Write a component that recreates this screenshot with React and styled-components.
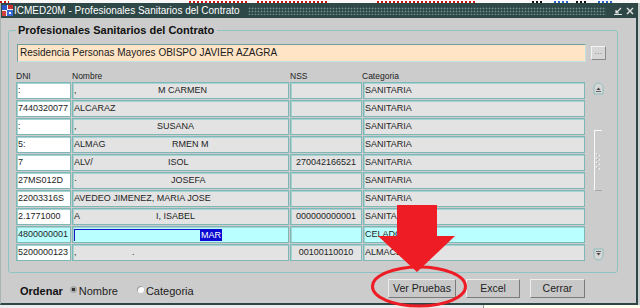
import styled, { createGlobalStyle } from "styled-components";

const GlobalStyle = createGlobalStyle`
  html, body {
    margin: 0;
    padding: 0;
    background: #d4d4d4;
  }
  body {
    font-family: "Liberation Sans", Arial, sans-serif;
  }
`;

const rows = [
  { dni: ":", name: ",", rest: "M CARMEN", at: 84, nss: "", cat: "SANITARIA" },
  { dni: "7440320077", name: "ALCARAZ", nss: "", cat: "SANITARIA" },
  { dni: ":", name: ",", rest: "SUSANA", at: 83, nss: "", cat: "SANITARIA" },
  { dni: "5:", name: "ALMAG", rest: "RMEN M", at: 98, nss: "", cat: "SANITARIA" },
  { dni: "7", name: "ALV/", rest: "ISOL", at: 94, nss: "270042166521", cat: "SANITARIA" },
  { dni: "27MS012D", name: "·", rest: "JOSEFA", at: 97, nss: "", cat: "SANITARIA" },
  { dni: "22003316S", name: "AVEDEO JIMENEZ, MARIA JOSE", nss: "", cat: "SANITARIA" },
  { dni: "2.1771000", name: "A", rest: "I, ISABEL", at: 82, nss: "000000000001", cat: "SANITARIA" },
  { dni: "4800000001", selected: "MAR", at: 126, nss: "", cat: "CELADOR", active: true },
  { dni: "5200000123", name: ",", rest: ".", at: 58, nss: "00100110010", cat: "ALMACEN" },
];

// bits of the window behind, peeking out above the title bar
const behind = [
  { w: 9, c: "#d01414" },
  { w: 180, c: "transparent" },
  { w: 60, c: "#d01414" },
  { w: 8, c: "transparent" },
  { w: 70, c: "#d01414" },
  { w: 50, c: "transparent" },
  { w: 100, c: "#d01414" },
  { w: 55, c: "transparent" },
  { w: 12, c: "#111111" },
  { w: 10, c: "transparent" },
  { w: 14, c: "#2a64c8" },
  { w: 8, c: "transparent" },
  { w: 12, c: "#111111" },
  { w: 10, c: "transparent" },
  { w: 14, c: "#2a64c8" },
];

function TitleIcon() {
  return (
    <svg width="11" height="11" viewBox="0 0 11 11">
      <rect x="0" y="0" width="11" height="11" fill="#f2f2f2" />
      <rect x="0" y="0" width="5" height="5" fill="#2a58c8" />
      <rect x="6" y="0" width="5" height="4" fill="#c83030" />
      <rect x="0" y="6" width="4" height="5" fill="#d04040" />
      <rect x="5" y="5" width="6" height="6" fill="#3a6ad8" />
      <rect x="7" y="7" width="2" height="2" fill="#fff" />
    </svg>
  );
}

function WindowControls() {
  return (
    <Controls>
      <svg width="8" height="8" viewBox="0 0 8 8">
        <path d="M7 1 L2 6 M2 3 L2 6 L5 6 M0 7.5 L8 7.5" stroke="#e4e4e4" strokeWidth="1.2" fill="none" />
      </svg>
      <svg width="8" height="8" viewBox="0 0 8 8">
        <path d="M1 1 L7 7 M7 1 L1 7" stroke="#e4e4e4" strokeWidth="1.4" />
      </svg>
    </Controls>
  );
}

function ScrollArrow({ down }) {
  return (
    <svg width="11" height="13" viewBox="0 0 11 13" style={down ? { transform: "scaleY(-1)" } : undefined}>
      <path d="M1 12 L1 5.5 A4.5 4.5 0 0 1 10 5.5 L10 12 Z" fill="#d6d6d6" stroke="#8cc0c0" strokeWidth="1" />
      <path d="M3.5 8 L5.5 5.5 L7.5 8 Z" fill="#444" />
      <path d="M3 9.5 L8 9.5" stroke="#666" strokeWidth="1" />
    </svg>
  );
}

function Grip() {
  return (
    <svg width="8" height="18" viewBox="0 0 8 18">
      {[0, 5, 10, 15].map((y) => (
        <g key={y}>
          <rect x="1" y={y} width="1.5" height="1.5" fill="#fafafa" />
          <rect x="4" y={y + 2} width="1.5" height="1.5" fill="#fafafa" />
          <rect x="2.5" y={y + 1.5} width="1" height="1" fill="#888" />
        </g>
      ))}
    </svg>
  );
}

function NameCell({ row }) {
  if (row.active) {
    return (
      <Cell $tone="cyan">
        <Focus $w={row.at} />
        <Selection>{row.selected}</Selection>
      </Cell>
    );
  }
  return (
    <Cell $tone="grey">
      {row.rest ? <Head $w={row.at}>{row.name}</Head> : row.name}
      {row.rest}
    </Cell>
  );
}

function Annotation() {
  return (
    <Overlay width="640" height="308" viewBox="0 0 640 308">
      <polygon
        points="397,205 437,205 437,236 455,236 417,272 378,236 397,236"
        fill="#ee1c24"
      />
      <ellipse cx="419" cy="286.5" rx="46.5" ry="19.5" fill="none" stroke="#ee1c24" strokeWidth="3" />
    </Overlay>
  );
}

export default function App() {
  return (
    <>
      <GlobalStyle />
      <Screen>
        <TopStrip>
          {behind.map((b, i) => (
            <Peek key={i} $w={b.w} $c={b.c} />
          ))}
        </TopStrip>
        <Window>
          <TitleBar>
            <IconSlot>
              <TitleIcon />
            </IconSlot>
            <TitleText>ICMED20M - Profesionales Sanitarios del Contrato</TitleText>
            <TitleDots />
            <WindowControls />
          </TitleBar>
          <Body>
            <Group>
              <Legend>Profesionales Sanitarios del Contrato</Legend>
              <InputRow>
                <Field>Residencia Personas Mayores OBISPO JAVIER AZAGRA</Field>
                <LovButton>...</LovButton>
              </InputRow>
              <TableArea>
                <Table>
                  <HeaderRow>
                    <span>DNI</span>
                    <span>Nombre</span>
                    <span>NSS</span>
                    <HeaderLast>Categoria</HeaderLast>
                  </HeaderRow>
                  <Rows>
                    {rows.map((row, i) => (
                      <Row key={i}>
                        <Cell $tone={row.active ? "cyan" : "white"}>{row.dni}</Cell>
                        <NameCell row={row} />
                        <Cell $tone={row.active ? "cyan" : "grey"} $center>
                          {row.nss}
                        </Cell>
                        <Cell $tone={row.active ? "cyan" : "grey"}>{row.cat}</Cell>
                      </Row>
                    ))}
                  </Rows>
                </Table>
                <Scroll>
                  <ScrollArrow />
                  <Thumb>
                    <Grip />
                  </Thumb>
                  <DownSlot>
                    <ScrollArrow down />
                  </DownSlot>
                </Scroll>
              </TableArea>
            </Group>
            <BottomBar>
              <SortLabel>Ordenar</SortLabel>
              <Radio $gap={19}>
                <RadioDot $checked />
                Nombre
              </Radio>
              <Radio>
                <RadioDot />
                Categoria
              </Radio>
              <Buttons>
                <Button $w={68}>Ver Pruebas</Button>
                <Button $w={54}>Excel</Button>
                <Button $w={55}>Cerrar</Button>
              </Buttons>
            </BottomBar>
          </Body>
        </Window>
        <BottomStrip>
          <StripLeft />
          <StripRight />
        </BottomStrip>
        <Annotation />
      </Screen>
    </>
  );
}

const Screen = styled.div`
  position: relative;
  width: 640px;
  height: 308px;
  overflow: hidden;
  display: flex;
  flex-direction: column;
  background: #c9cfcf;
`;

const TopStrip = styled.div`
  height: 3px;
  flex-shrink: 0;
  display: flex;
  background: #f8f8f8;
`;

const Peek = styled.span`
  width: ${(p) => p.$w}px;
  height: 2px;
  margin-top: 1px;
  flex-shrink: 0;
  background: ${(p) =>
    p.$c === "transparent"
      ? "transparent"
      : `repeating-linear-gradient(90deg, ${p.$c} 0 2px, transparent 2px 4px)`};
`;

const Window = styled.div`
  width: 638px;
  height: 302px;
  box-sizing: border-box;
  border-left: 1px solid #aab4b4;
  border-right: 2px solid #2d4545;
  border-bottom: 2px solid #2d4545;
  display: flex;
  flex-direction: column;
  background: #cccccc;
`;

const TitleBar = styled.div`
  height: 15px;
  flex-shrink: 0;
  display: flex;
  align-items: center;
  background: #2e4848;
  color: #ffffff;
  font-size: 10px;
`;

const IconSlot = styled.div`
  display: flex;
  margin-left: 1px;
  margin-right: 1px;
`;

const TitleText = styled.span`
  white-space: nowrap;
  line-height: 15px;
`;

const TitleDots = styled.div`
  flex: 1;
  height: 8px;
  margin: 0 8px 0 8px;
  background-image: radial-gradient(circle, #6e8e8e 0.8px, transparent 1.1px);
  background-size: 3px 3px;
`;

const Controls = styled.div`
  display: flex;
  align-items: center;
  gap: 4px;
  margin-right: 2px;
`;

const Body = styled.div`
  flex: 1;
  display: flex;
  flex-direction: column;
  padding: 5px 18px 0 7px;
`;

const Group = styled.fieldset`
  margin: 0;
  padding: 7px 11px 11px 7px;
  border: 1px solid #8ec3c3;
  border-radius: 3px;
  min-width: 0;
`;

const Legend = styled.legend`
  padding: 0 3px 0 2px;
  font-size: 11px;
  font-weight: bold;
  line-height: 14px;
  color: #111111;
`;

const InputRow = styled.div`
  display: flex;
  align-items: center;
  gap: 5px;
`;

const Field = styled.div`
  margin-left: 1px;
  width: 569px;
  height: 18px;
  box-sizing: border-box;
  padding-left: 2px;
  background: #ffe4c6;
  border: 1px solid;
  border-color: #6f9c9c #c4e2e2 #c4e2e2 #6f9c9c;
  font-size: 10px;
  line-height: 16px;
  color: #1a1a1a;
  white-space: nowrap;
`;

const LovButton = styled.div`
  width: 15px;
  height: 14px;
  box-sizing: border-box;
  display: flex;
  align-items: center;
  justify-content: center;
  border: 1px solid;
  border-color: #f4f4f4 #8a8a8a #8a8a8a #f4f4f4;
  background: #d6d6d6;
  font-size: 8px;
  line-height: 8px;
  color: #666666;
  letter-spacing: 0.5px;
  padding-bottom: 3px;
`;

const TableArea = styled.div`
  display: flex;
`;

const Table = styled.div`
  width: 569px;
  display: flex;
  flex-direction: column;
`;

const columns = "55px 217px 72px 222px";

const HeaderRow = styled.div`
  display: grid;
  grid-template-columns: ${columns};
  column-gap: 1px;
  margin-top: 8px;
  height: 12px;
  font-size: 8.5px;
  line-height: 12px;
  color: #222222;
`;

const HeaderLast = styled.span`
  margin-left: -1px;
`;

const Rows = styled.div`
  display: flex;
  flex-direction: column;
  gap: 1px;
`;

const Row = styled.div`
  display: grid;
  grid-template-columns: ${columns};
  column-gap: 1px;
  height: 17px;
`;

const tones = {
  white: "#ffffff",
  grey: "#e3e3e3",
  cyan: "#baffff",
};

const Cell = styled.div`
  box-sizing: border-box;
  height: 17px;
  display: flex;
  align-items: center;
  justify-content: ${(p) => (p.$center ? "center" : "flex-start")};
  padding: 0 1px;
  border: 1px solid #7fb6b6;
  box-shadow: inset 1px 1px 0 #a6d3d3;
  background: ${(p) => tones[p.$tone]};
  font-size: 9px;
  line-height: 15px;
  color: #1e1e1e;
  white-space: nowrap;
  overflow: hidden;
`;

const Head = styled.span`
  display: inline-block;
  flex-shrink: 0;
  width: ${(p) => p.$w}px;
`;

const Focus = styled.span`
  flex-shrink: 0;
  width: ${(p) => p.$w}px;
  height: 12px;
  box-sizing: border-box;
  border-top: 1px solid #1414c8;
  border-left: 1px solid #1414c8;
`;

const Selection = styled.span`
  background: #0a0ad2;
  color: #ffffff;
  line-height: 12px;
  padding: 0 1px;
`;

const Scroll = styled.div`
  width: 12px;
  margin-left: 7px;
  padding-top: 20px;
  display: flex;
  flex-direction: column;
  align-items: center;
`;

const Thumb = styled.div`
  margin-top: 35px;
  width: 8px;
  height: 61px;
  box-sizing: border-box;
  border-top: 1px solid #fafafa;
  border-left: 1px solid #fafafa;
  border-bottom: 1px solid #a8a8a8;
  display: flex;
  align-items: center;
  justify-content: center;
`;

const DownSlot = styled.div`
  margin-top: auto;
  display: flex;
`;

const BottomBar = styled.div`
  height: 30px;
  display: flex;
  align-items: center;
  padding: 0 33px 0 12px;
`;

const SortLabel = styled.span`
  font-size: 11px;
  font-weight: bold;
  color: #111111;
  margin-right: 7px;
  padding-top: 5px;
`;

const Radio = styled.label`
  display: inline-flex;
  align-items: center;
  font-size: 11px;
  color: #222222;
  margin-right: ${(p) => p.$gap || 0}px;
  padding-top: 5px;
`;

const RadioDot = styled.span`
  width: 7px;
  height: 7px;
  border-radius: 50%;
  margin-right: 2px;
  margin-top: -2px;
  box-sizing: border-box;
  background: ${(p) => (p.$checked ? "radial-gradient(circle, #333 0 1.6px, #a8a8a8 2px)" : "#ffffff")};
  box-shadow: ${(p) => (p.$checked ? "none" : "inset 1px 1px 0 #9a9a9a")};
`;

const Buttons = styled.div`
  margin-left: auto;
  display: flex;
  gap: 10px;
`;

const Button = styled.button`
  width: ${(p) => p.$w}px;
  height: 19px;
  padding: 0;
  box-sizing: border-box;
  border: 1px solid;
  border-color: #eeeeee #7a7a7a #7a7a7a #eeeeee;
  background: #c8c8c8;
  font-family: "Liberation Sans", Arial, sans-serif;
  font-size: 10.5px;
  color: #222222;
`;

const BottomStrip = styled.div`
  flex: 1;
  display: flex;
`;

const StripLeft = styled.div`
  width: 483px;
  background: #ececec;
  border-right: 1px solid #9a9a9a;
`;

const StripRight = styled.div`
  flex: 1;
  background: #fffff0;
`;

const Overlay = styled.svg`
  position: absolute;
  top: 0;
  left: 0;
  pointer-events: none;
`;
